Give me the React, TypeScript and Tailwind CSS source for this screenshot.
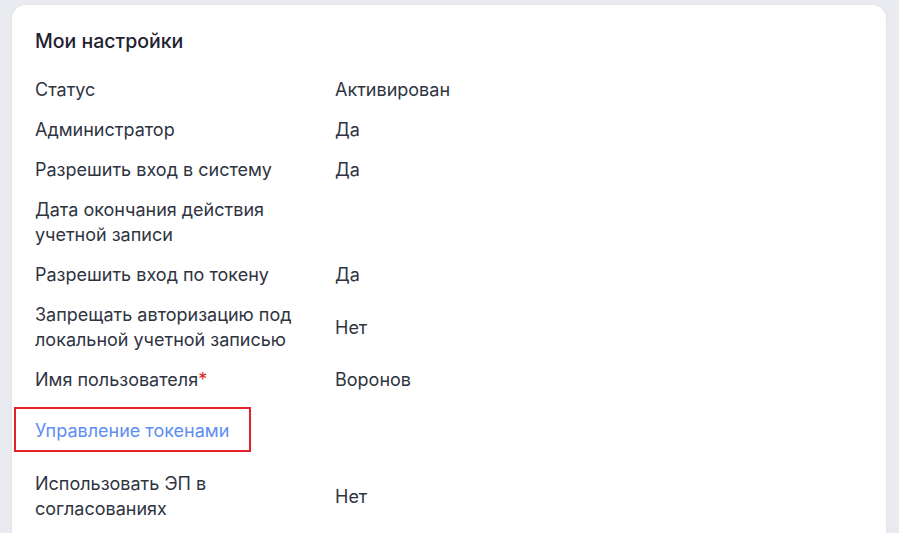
import React from 'react';

type Row = { label: React.ReactNode; value?: string };

const rows: Row[] = [
  { label: 'Статус', value: 'Активирован' },
  { label: 'Администратор', value: 'Да' },
  { label: 'Разрешить вход в систему', value: 'Да' },
  { label: 'Дата окончания действия учетной записи' },
  { label: 'Разрешить вход по токену', value: 'Да' },
  { label: 'Запрещать авторизацию под локальной учетной записью', value: 'Нет' },
  {
    label: (
      <>
        Имя пользователя<span className="text-[#e0231f]">*</span>
      </>
    ),
    value: 'Воронов',
  },
];

function SettingRow({ label, value }: Row) {
  return (
    <div className="flex items-center">
      <div className="w-[300px] pr-[20px] shrink-0">{label}</div>
      <div>{value}</div>
    </div>
  );
}

export default function App() {
  return (
    <div
      className="w-[899px] h-[533px] overflow-hidden bg-[#e9ebf0] pt-[5px] pl-[12px] pr-[13px]"
      style={{ fontFamily: 'Inter, Roboto, sans-serif' }}
    >
      <div className="bg-white rounded-[14px] shadow-[0_0_3px_rgba(0,0,0,0.06)] h-[600px] px-[23px] pt-[24px] text-[18px] leading-[25px] text-[#2f3441]">
        <h2 className="text-[19.5px] leading-[24px] font-medium text-[#1f2330] mb-[24px]">Мои настройки</h2>
        <div className="flex flex-col gap-[15px]">
          {rows.map((r, i) => (
            <SettingRow key={i} {...r} />
          ))}
        </div>
        <div className="mt-[15px] -ml-[21px] w-[237px] h-[45px] border-2 border-[#e3212b] flex items-center pl-[19px]">
          <a className="text-[#5d8ef0] cursor-pointer pt-[2px]">Управление токенами</a>
        </div>
        <div className="mt-[19px]">
          <SettingRow label="Использовать ЭП в согласованиях" value="Нет" />
        </div>
      </div>
    </div>
  );
}
